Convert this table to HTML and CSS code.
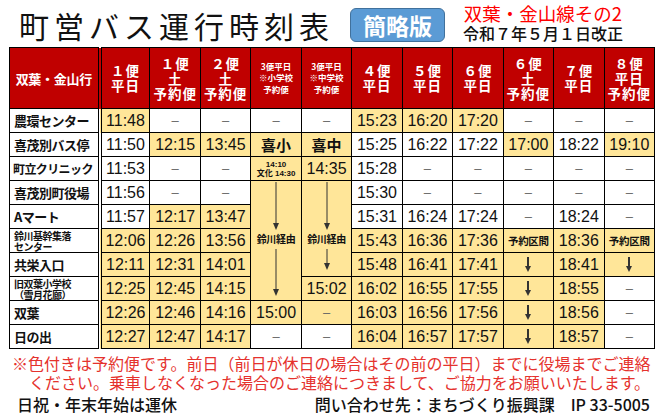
FILE: index.html
```html
<!DOCTYPE html>
<html lang="ja">
<head>
<meta charset="utf-8">
<title>町営バス運行時刻表</title>
<link rel="stylesheet" href="styles.css">
</head>
<body>
<header class="top">
  <h1 class="title">町営バス運行時刻表</h1>
  <div class="badge">簡略版</div>
  <div class="sub">
    <div class="route">双葉・金山線その2</div>
    <div class="date">令和７年５月１日改正</div>
  </div>
</header>

<table class="tt">
  <colgroup>
    <col class="c-name">
    <col><col><col><col><col><col><col><col><col><col><col>
  </colgroup>
  <thead>
    <tr>
      <th class="h-name">双葉・金山行</th>
      <th class="first">１便<br>平日</th>
      <th>１便<br>土<br>予約便</th>
      <th>２便<br>土<br>予約便</th>
      <th class="hs">3便平日<br>※小学校<br>予約便</th>
      <th class="hs">3便平日<br>※中学校<br>予約便</th>
      <th>４便<br>平日</th>
      <th>５便<br>平日</th>
      <th>６便<br>平日</th>
      <th>６便<br>土<br>予約便</th>
      <th>７便<br>平日</th>
      <th>８便<br>平日<br>予約便</th>
    </tr>
  </thead>
  <tbody>
    <tr>
      <td class="nm">農環センター</td>
      <td class="first y">11:48</td>
      <td class="d">–</td><td class="d">–</td><td class="d">–</td><td class="d">–</td>
      <td class="y">15:23</td><td class="y">16:20</td><td class="y">17:20</td>
      <td class="d">–</td><td class="d">–</td><td class="d">–</td>
    </tr>
    <tr>
      <td class="nm">喜茂別バス停</td>
      <td class="first">11:50</td>
      <td class="y">12:15</td><td class="y">13:45</td>
      <td class="y big">喜小</td><td class="y big">喜中</td>
      <td>15:25</td><td>16:22</td><td>17:22</td>
      <td class="y">17:00</td><td>18:22</td><td class="y">19:10</td>
    </tr>
    <tr>
      <td class="nm tight">町立クリニック</td>
      <td class="first">11:53</td>
      <td class="d">–</td><td class="d">–</td>
      <td class="y tiny">14:10<br>文化 14:30</td>
      <td class="y">14:35</td>
      <td>15:28</td>
      <td class="d">–</td><td class="d">–</td><td class="d">–</td><td class="d">–</td><td class="d">–</td>
    </tr>
    <tr>
      <td class="nm">喜茂別町役場</td>
      <td class="first">11:56</td>
      <td class="d">–</td><td class="d">–</td>
      <td class="y via" rowspan="5">
        <div class="via-box v5">
          <svg class="va" width="8" height="48" viewBox="0 0 8 48"><line x1="4" y1="0" x2="4" y2="42" stroke="#333" stroke-width="1"/><path d="M1 41 L7 41 L4 48 Z" fill="#333"/></svg>
          <span class="via-t">鈴川経由</span>
          <svg class="va" width="8" height="47" viewBox="0 0 8 47"><line x1="4" y1="0" x2="4" y2="41" stroke="#333" stroke-width="1"/><path d="M1 40 L7 40 L4 47 Z" fill="#333"/></svg>
        </div>
      </td>
      <td class="y via" rowspan="4">
        <div class="via-box v4">
          <svg class="va" width="8" height="48" viewBox="0 0 8 48"><line x1="4" y1="0" x2="4" y2="42" stroke="#333" stroke-width="1"/><path d="M1 41 L7 41 L4 48 Z" fill="#333"/></svg>
          <span class="via-t">鈴川経由</span>
          <svg class="va" width="8" height="21" viewBox="0 0 8 21"><line x1="4" y1="0" x2="4" y2="15" stroke="#333" stroke-width="1"/><path d="M1 14 L7 14 L4 21 Z" fill="#333"/></svg>
        </div>
      </td>
      <td>15:30</td>
      <td class="d">–</td><td class="d">–</td><td class="d">–</td><td class="d">–</td><td class="d">–</td>
    </tr>
    <tr>
      <td class="nm">Aマート</td>
      <td class="first">11:57</td>
      <td class="y">12:17</td><td class="y">13:47</td>
      <td>15:31</td><td>16:24</td><td>17:24</td>
      <td class="d">–</td><td>18:24</td><td class="d">–</td>
    </tr>
    <tr>
      <td class="nm sm">鈴川基幹集落<br>センター</td>
      <td class="first y">12:06</td>
      <td class="y">12:26</td><td class="y">13:56</td>
      <td class="y">15:43</td><td class="y">16:36</td><td class="y">17:36</td>
      <td class="y rsv">予約区間</td><td class="y">18:36</td><td class="y rsv">予約区間</td>
    </tr>
    <tr>
      <td class="nm">共栄入口</td>
      <td class="first y">12:11</td>
      <td class="y">12:31</td><td class="y">14:01</td>
      <td class="y">15:48</td><td class="y">16:41</td><td class="y">17:41</td>
      <td class="y"><svg class="da" width="8" height="15" viewBox="0 0 8 15"><rect x="3" y="0" width="2" height="10" fill="#333"/><path d="M1 9 L7 9 L4 15 Z" fill="#333"/></svg></td>
      <td class="y">18:41</td>
      <td class="y"><svg class="da" width="8" height="15" viewBox="0 0 8 15"><rect x="3" y="0" width="2" height="10" fill="#333"/><path d="M1 9 L7 9 L4 15 Z" fill="#333"/></svg></td>
    </tr>
    <tr>
      <td class="nm sm">旧双葉小学校<br>（雪月花廊）</td>
      <td class="first y">12:25</td>
      <td class="y">12:45</td><td class="y">14:15</td>
      <td class="y">15:02</td>
      <td class="y">16:02</td><td class="y">16:55</td><td class="y">17:55</td>
      <td class="y"><svg class="da" width="8" height="15" viewBox="0 0 8 15"><rect x="3" y="0" width="2" height="10" fill="#333"/><path d="M1 9 L7 9 L4 15 Z" fill="#333"/></svg></td>
      <td class="y">18:55</td>
      <td class="d">–</td>
    </tr>
    <tr>
      <td class="nm">双葉</td>
      <td class="first y">12:26</td>
      <td class="y">12:46</td><td class="y">14:16</td>
      <td class="y">15:00</td><td class="y d">–</td>
      <td class="y">16:03</td><td class="y">16:56</td><td class="y">17:56</td>
      <td class="y"><svg class="da" width="8" height="15" viewBox="0 0 8 15"><rect x="3" y="0" width="2" height="10" fill="#333"/><path d="M1 9 L7 9 L4 15 Z" fill="#333"/></svg></td>
      <td class="y">18:56</td>
      <td class="d">–</td>
    </tr>
    <tr>
      <td class="nm">日の出</td>
      <td class="first y">12:27</td>
      <td class="y">12:47</td><td class="y">14:17</td>
      <td class="d">–</td><td class="d">–</td>
      <td class="y">16:04</td><td class="y">16:57</td><td class="y">17:57</td>
      <td class="y"><svg class="da" width="8" height="15" viewBox="0 0 8 15"><rect x="3" y="0" width="2" height="10" fill="#333"/><path d="M1 9 L7 9 L4 15 Z" fill="#333"/></svg></td>
      <td class="y">18:57</td>
      <td class="d">–</td>
    </tr>
  </tbody>
</table>

<footer class="foot">
  <p class="note l1">※色付きは予約便です。前日（前日が休日の場合はその前の平日）までに役場までご連絡</p>
  <p class="note l2">ください。乗車しなくなった場合のご連絡につきまして、ご協力をお願いいたします。</p>
  <div class="bottom">
    <span>日祝・年末年始は運休</span>
    <span>問い合わせ先：まちづくり振興課　IP 33-5005</span>
  </div>
</footer>
</body>
</html>
```

FILE: styles.css
```css
html, body {
  margin: 0;
  padding: 0;
  background: #fff;
}
body {
  width: 671px;
  height: 415px;
  overflow: hidden;
  font-family: "Noto Sans CJK JP", "Noto Sans", sans-serif;
  color: #111;
}

/* ---------- header ---------- */
.top {
  display: flex;
  align-items: center;
  height: 47px;
  padding: 3px 0 0 19px;
  box-sizing: border-box;
}
.title {
  margin: 0;
  font-size: 30px;
  font-weight: 400;
  letter-spacing: 5px;
  line-height: 1;
  color: #111;
}
.badge {
  margin-left: 16px;
  width: 95px;
  height: 34px;
  box-sizing: border-box;
  background: #5b9bd5;
  border: 1.5px solid #41719c;
  border-radius: 6px;
  color: #fff;
  font-size: 23px;
  font-weight: 700;
  display: flex;
  align-items: center;
  justify-content: center;
}
.sub {
  margin-left: 18px;
  margin-top: -6px;
  display: flex;
  flex-direction: column;
  align-items: center;
}
.route {
  color: #f00;
  font-size: 18.5px;
  line-height: 22px;
}
.date {
  font-size: 16px;
  line-height: 18px;
  font-weight: 500;
}

/* ---------- table ---------- */
.tt {
  margin-left: 9px;
  width: 646px;
  border-collapse: collapse;
  table-layout: fixed;
}
.c-name { width: 90px; }
.tt th {
  background: #c00000;
  color: #fff;
  font-weight: 700;
  border: 1px solid #000;
  height: 60px;
  padding: 0;
  font-size: 13.5px;
  line-height: 15px;
  letter-spacing: 1px;
  text-align: center;
}
.tt th.h-name {
  font-size: 13px;
  letter-spacing: -0.3px;
}
.tt th.hs {
  font-size: 8.5px;
  line-height: 11.5px;
  letter-spacing: 0;
}
.tt tbody tr { height: 24px; }
.tt td {
  border: 1px solid #000;
  padding: 0;
  text-align: center;
  vertical-align: middle;
  font-family: "Liberation Sans", "Noto Sans CJK JP", sans-serif;
  font-size: 16px;
  line-height: 18px;
  color: #111;
  background: #fff;
}
.tt .first { border-left: 4px double #000; }
.tt td.y { background: #ffe699; }
.tt td.d { color: #666; font-size: 13px; }
.tt td.nm {
  text-align: left;
  padding-left: 4px;
  font-family: "Noto Sans CJK JP", sans-serif;
  font-weight: 700;
  font-size: 13px;
  letter-spacing: -0.5px;
  white-space: nowrap;
}
.tt td.nm.tight { font-size: 12px; letter-spacing: -0.6px; padding-left: 3px; }
.tt td.nm.sm { font-size: 10px; line-height: 11px; }
.tt td.big {
  font-family: "Noto Sans CJK JP", sans-serif;
  font-weight: 700;
  font-size: 15px;
}
.tt td.tiny {
  font-weight: 700;
  font-size: 8px;
  line-height: 9px;
}
.tt td.rsv {
  font-family: "Noto Sans CJK JP", sans-serif;
  font-weight: 700;
  font-size: 10.5px;
  letter-spacing: -0.3px;
}
.tt td.via { vertical-align: top; }
.via-box {
  display: flex;
  flex-direction: column;
  align-items: center;
  padding-top: 1px;
}
.va { display: block; }
.via-t {
  display: block;
  font-family: "Noto Sans CJK JP", sans-serif;
  font-weight: 700;
  font-size: 10px;
  line-height: 14px;
  letter-spacing: -0.3px;
  margin: 2px 0 3px;
  white-space: nowrap;
}
.da { display: block; margin: 0 auto; }

/* ---------- footer ---------- */
.foot { margin-top: 5px; }
.note {
  margin: 0;
  color: #e5322d;
  font-size: 16px;
  line-height: 19px;
  white-space: nowrap;
}
.l1 { padding-left: 12px; }
.l2 { padding-left: 29px; }
.bottom {
  display: flex;
  justify-content: space-between;
  margin-top: 2px;
  padding: 0 21px 0 17px;
  font-size: 16px;
  line-height: 20px;
  font-weight: 500;
}
```
